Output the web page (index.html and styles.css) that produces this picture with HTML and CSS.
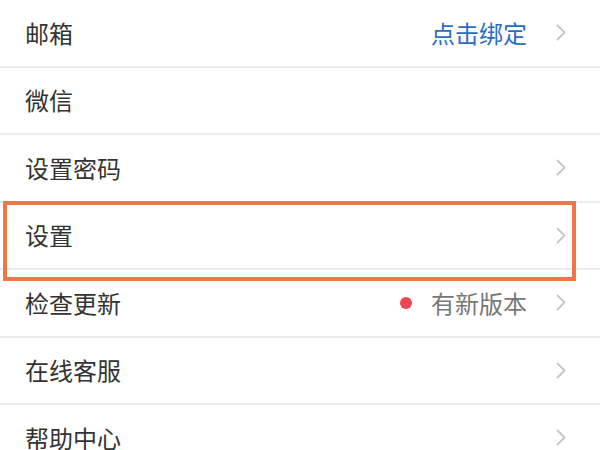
FILE: index.html
```html
<!DOCTYPE html>
<html lang="zh-CN">
<head>
<meta charset="utf-8">
<title>设置</title>
<link rel="stylesheet" href="styles.css">
</head>
<body>
<div class="list">
  <div class="row">
    <span class="label">邮箱</span>
    <span class="value value-link">点击绑定</span>
    <svg class="chev" viewBox="0 0 10 17" width="10" height="17"><path d="M1.5 1.5 L8.5 8.5 L1.5 15.5"/></svg>
  </div>
  <div class="row">
    <span class="label">微信</span>
  </div>
  <div class="row">
    <span class="label">设置密码</span>
    <svg class="chev" viewBox="0 0 10 17" width="10" height="17"><path d="M1.5 1.5 L8.5 8.5 L1.5 15.5"/></svg>
  </div>
  <div class="row">
    <span class="label">设置</span>
    <svg class="chev" viewBox="0 0 10 17" width="10" height="17"><path d="M1.5 1.5 L8.5 8.5 L1.5 15.5"/></svg>
  </div>
  <div class="row">
    <span class="label">检查更新</span>
    <span class="dot"></span>
    <span class="value value-muted">有新版本</span>
    <svg class="chev" viewBox="0 0 10 17" width="10" height="17"><path d="M1.5 1.5 L8.5 8.5 L1.5 15.5"/></svg>
  </div>
  <div class="row">
    <span class="label">在线客服</span>
    <svg class="chev" viewBox="0 0 10 17" width="10" height="17"><path d="M1.5 1.5 L8.5 8.5 L1.5 15.5"/></svg>
  </div>
  <div class="row">
    <span class="label">帮助中心</span>
    <svg class="chev" viewBox="0 0 10 17" width="10" height="17"><path d="M1.5 1.5 L8.5 8.5 L1.5 15.5"/></svg>
  </div>
</div>
<div class="highlight"></div>
</body>
</html>
```
FILE: styles.css
```css
html, body {
  margin: 0;
  padding: 0;
  background: #ffffff;
  overflow: hidden;
}
body {
  position: relative;
  width: 600px;
  height: 450px;
  font-family: "Noto Sans CJK SC", "Noto Sans", sans-serif;
  color: #333333;
}
.list {
  display: flex;
  flex-direction: column;
}
.row {
  display: flex;
  align-items: center;
  height: 65.5px;
  padding: 0 34px 0 25px;
  border-bottom: 2px solid #ebebeb;
  flex-shrink: 0;
}
.label {
  font-size: 24px;
  line-height: 1;
  flex: 1;
}
.value {
  font-size: 24px;
  line-height: 1;
}
.value-link {
  color: #2b6cc4;
}
.value-muted {
  color: #777777;
}
.dot {
  width: 12px;
  height: 12px;
  border-radius: 50%;
  background: #ef4750;
  margin-right: 19px;
}
.chev {
  margin-left: 29px;
  display: block;
}
.chev path {
  fill: none;
  stroke: #c6c6c6;
  stroke-width: 1.8;
  stroke-linecap: round;
  stroke-linejoin: round;
}
.highlight {
  position: absolute;
  left: 3px;
  top: 201px;
  width: 573px;
  height: 80px;
  box-sizing: border-box;
  border: 4px solid #ef7646;
}
```
